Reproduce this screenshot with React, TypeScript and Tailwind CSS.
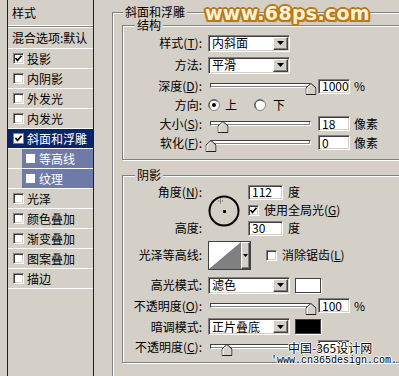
import type { ReactNode } from "react";

// classic win32 bevels
const sunken =
  "border border-t-[#808080] border-l-[#808080] border-b-white border-r-white shadow-[inset_1px_1px_0_#404040,inset_-1px_-1px_0_#d4d0c8]";
const raised =
  "border border-t-white border-l-white border-b-[#404040] border-r-[#404040] shadow-[inset_-1px_-1px_0_#808080]";
const group =
  "border border-[#808080] shadow-[inset_1px_1px_0_#fff,1px_1px_0_#fff]";

const layers = [
  { name: "投影", checked: true },
  { name: "内阴影" },
  { name: "外发光" },
  { name: "内发光" },
  { name: "斜面和浮雕", checked: true, active: true },
  { name: "等高线", sub: true },
  { name: "纹理", sub: true },
  { name: "光泽" },
  { name: "颜色叠加" },
  { name: "渐变叠加" },
  { name: "图案叠加" },
  { name: "描边" },
];

function Check({ checked, light }: { checked?: boolean; light?: boolean }) {
  return (
    <div
      className={`w-[11px] h-[11px] shrink-0 bg-white flex items-center justify-center ${
        light ? "border border-[#808080]" : sunken
      }`}
    >
      {checked && (
        <svg width="9" height="9" viewBox="0 0 9 9">
          <polyline
            points="1.5,4 3.5,6.5 7.5,1.8"
            fill="none"
            stroke="#000"
            strokeWidth="1.7"
          />
        </svg>
      )}
    </div>
  );
}

function LayerList() {
  return (
    <div className="ml-[7px] w-[87px] h-[376px] shrink-0 border-x border-[#202020]">
      <div className="h-[25px] pl-[4px] flex items-center">样式</div>
      <div className="h-[3px] border-y border-white bg-[#808080]" />
      <div className="h-[21px] pl-[4px] flex items-center border-b border-white whitespace-nowrap overflow-hidden">
        混合选项:默认
      </div>
      {layers.map((l) =>
        l.sub ? (
          <div key={l.name} className="h-[20px] pl-[14px] border-b border-white">
            <div className="h-full bg-[#6e7aa8] text-white flex items-center pl-[3px] gap-[3px]">
              <Check light />
              {l.name}
            </div>
          </div>
        ) : (
          <div
            key={l.name}
            className={`h-[20px] flex items-center pl-[5px] gap-[3px] border-b border-white ${
              l.active ? "bg-[#0a246a] text-white" : ""
            }`}
          >
            <Check checked={l.checked} light={l.active} />
            {l.name}
          </div>
        ),
      )}
    </div>
  );
}

function Label({ children }: { children: ReactNode }) {
  return <div className="w-[79px] shrink-0 text-right whitespace-nowrap">{children}</div>;
}

function Row({
  label,
  h,
  children,
}: {
  label: ReactNode;
  h: string;
  children?: ReactNode;
}) {
  return (
    <div className={`flex items-center ${h}`}>
      <Label>{label}</Label>
      <div className="ml-[6px] flex items-center">{children}</div>
    </div>
  );
}

function Select({ value }: { value: string }) {
  return (
    <div className={`w-[82px] h-[17px] bg-white p-[1px] flex ${sunken}`}>
      <div className="flex-1 pl-[2px] flex items-center whitespace-nowrap">
        {value}
      </div>
      <div className={`w-[15px] h-full bg-[#d4d0c8] flex items-center justify-center ${raised}`}>
        <svg width="7" height="4" viewBox="0 0 7 4">
          <polygon points="0,0 7,0 3.5,4" fill="#000" />
        </svg>
      </div>
    </div>
  );
}

function Field({ value, w = "w-[32px]" }: { value?: string; w?: string }) {
  return (
    <div className={`${w} h-[15px] bg-white pl-[3px] flex items-center ${sunken}`}>
      {value}
    </div>
  );
}

function Slider({ pct }: { pct: number }) {
  return (
    <div className="relative ml-[2px] mt-[6px] w-[101px] h-[12px] shrink-0">
      <div className="h-[5px] w-full border border-t-[#404040] border-l-[#404040] border-b-white border-r-white bg-white shadow-[inset_-1px_-1px_0_#808080]" />
      <svg
        className="absolute top-0 -translate-x-1/2"
        style={{ left: `${pct}%` }}
        width="11"
        height="12"
        viewBox="0 0 11 12"
      >
        <polygon
          points="5.5,0.5 10.5,5 10.5,11.5 0.5,11.5 0.5,5"
          fill="#d4d0c8"
          stroke="#202020"
        />
        <polyline points="1.5,11 1.5,5.4 5.5,1.8" fill="none" stroke="#fff" />
      </svg>
    </div>
  );
}

function Radio({ on }: { on?: boolean }) {
  return (
    <svg width="12" height="12" viewBox="0 0 12 12" className="shrink-0">
      <circle cx="6" cy="6" r="5.5" fill="#fff" stroke="#808080" />
      <path d="M2.5 9.5 A4.8 4.8 0 0 1 9.5 2.5" fill="none" stroke="#404040" />
      {on && <circle cx="6" cy="6" r="2" fill="#000" />}
    </svg>
  );
}

function AngleDial() {
  return (
    <svg width="32" height="32" viewBox="0 0 32 32">
      <circle cx="16" cy="16" r="14.5" fill="none" stroke="#000" strokeWidth="2" />
      <rect x="15" y="15" width="3" height="3" fill="#000" />
      <path d="M12.5 3.5 v5 M10 6 h5" stroke="#555" strokeDasharray="1 1" />
    </svg>
  );
}

function Contour() {
  return (
    <div className="flex h-[29px] border border-[#404040]">
      <svg width="32" height="27" viewBox="0 0 32 27">
        <rect width="32" height="27" fill="#fff" />
        <polygon points="0,27 32,0 32,27" fill="#808080" />
      </svg>
      <div className={`w-[9px] bg-[#d4d0c8] flex items-center justify-center ${raised}`}>
        <svg width="5" height="3" viewBox="0 0 5 3">
          <polygon points="0,0 5,0 2.5,3" fill="#000" />
        </svg>
      </div>
    </div>
  );
}

function Swatch({ color }: { color: string }) {
  return (
    <div className={`ml-[5px] w-[26px] h-[15px] border border-[#404040] ${color} shadow-[1px_1px_0_#fff]`} />
  );
}

export default function App() {
  return (
    <div className="relative w-[399px] h-[376px] overflow-hidden bg-[#d4d0c8] flex text-[12px] leading-[14px] text-black font-['Noto_Sans_CJK_SC',sans-serif]">
      <LayerList />

      <fieldset className={`ml-[18px] mt-[6px] w-[300px] h-[420px] shrink-0 ${group}`}>
        <legend className="ml-[10px] px-[2px] leading-[12px] bg-[#d4d0c8]">斜面和浮雕</legend>

        <fieldset className={`ml-[9px] mt-[1px] w-[280px] pt-[1px] pb-[7px] ${group}`}>
          <legend className="ml-[12px] px-[2px] leading-[12px] bg-[#d4d0c8]">结构</legend>
          <Row label={<>样式(<u>T</u>):</>} h="h-[22px]">
            <Select value="内斜面" />
          </Row>
          <Row label="方法:" h="h-[22px]">
            <Select value="平滑" />
          </Row>
          <Row label={<>深度(<u>D</u>):</>} h="h-[20px]">
            <Slider pct={100} />
            <div className="ml-[7px]">
              <Field value="1000" />
            </div>
            <span className="ml-[4px]">%</span>
          </Row>
          <Row label="方向:" h="h-[18px]">
            <Radio on />
            <span className="ml-[5px]">上</span>
            <div className="ml-[17px]">
              <Radio />
            </div>
            <span className="ml-[7px]">下</span>
          </Row>
          <Row label={<>大小(<u>S</u>):</>} h="h-[19px]">
            <Slider pct={13} />
            <div className="ml-[7px]">
              <Field value="18" />
            </div>
            <span className="ml-[4px]">像素</span>
          </Row>
          <Row label={<>软化(<u>F</u>):</>} h="h-[19px]">
            <Slider pct={1} />
            <div className="ml-[7px]">
              <Field value="0" />
            </div>
            <span className="ml-[4px]">像素</span>
          </Row>
        </fieldset>

        <fieldset className={`ml-[9px] mt-[9px] w-[280px] pb-[5px] ${group}`}>
          <legend className="ml-[12px] px-[2px] leading-[12px] bg-[#d4d0c8]">阴影</legend>
          <div className="flex pt-[2px]">
            <div className="flex flex-col">
              <div className="h-[18px] flex items-center">
                <Label>角度(<u>N</u>):</Label>
              </div>
              <div className="h-[18px]" />
              <div className="h-[18px] flex items-center">
                <Label>高度:</Label>
              </div>
            </div>
            <div className="ml-[6px] pt-[12px]">
              <AngleDial />
            </div>
            <div className="ml-[8px] flex flex-col">
              <div className="h-[18px] flex items-center">
                <Field value="112" w="w-[35px]" />
                <span className="ml-[5px]">度</span>
              </div>
              <div className="h-[18px] flex items-center">
                <Check checked />
                <span className="ml-[5px]">使用全局光(<u>G</u>)</span>
              </div>
              <div className="h-[18px] flex items-center">
                <Field value="30" w="w-[35px]" />
                <span className="ml-[5px]">度</span>
              </div>
            </div>
          </div>
          <div className="mt-[3px]">
            <Row label="光泽等高线:" h="h-[30px]">
              <Contour />
              <div className="ml-[15px]">
                <Check />
              </div>
              <span className="ml-[5px]">消除锯齿(<u>L</u>)</span>
            </Row>
          </div>
          <div className="mt-[5px]">
            <Row label="高光模式:" h="h-[20px]">
              <Select value="滤色" />
              <Swatch color="bg-white" />
            </Row>
          </div>
          <Row label={<>不透明度(<u>O</u>):</>} h="h-[21px]">
            <Slider pct={100} />
            <div className="ml-[7px]">
              <Field value="100" />
            </div>
            <span className="ml-[4px]">%</span>
          </Row>
          <Row label="暗调模式:" h="h-[21px]">
            <Select value="正片叠底" />
            <Swatch color="bg-black" />
          </Row>
          <Row label={<>不透明度(<u>C</u>):</>} h="h-[20px]">
            <Slider pct={17} />
            <div className="ml-[7px]">
              <Field />
            </div>
          </Row>
        </fieldset>
      </fieldset>

      {/* watermarks */}
      <div className="absolute left-[205px] top-[1px] text-[19px] leading-[24px] font-bold tracking-[0.3px] text-[#fcf1d2] font-['DejaVu_Sans',sans-serif] [text-shadow:2px_0_0_#b8791c,-2px_0_0_#b8791c,0_2px_0_#b8791c,0_-2px_0_#b8791c,1.5px_1.5px_0_#b8791c,-1.5px_1.5px_0_#b8791c,1.5px_-1.5px_0_#b8791c,-1.5px_-1.5px_0_#b8791c,2px_2px_1px_#c89040]">
        www.68ps.com
      </div>
      <div className="absolute left-[288px] top-[340px] leading-[16px] [text-shadow:1px_0_0_#fff,-1px_0_0_#fff,0_1px_0_#fff,0_-1px_0_#fff]">
        中国-365设计网
      </div>
      <div className="absolute left-[271px] top-[355px] text-[10px] leading-[11px] font-['Liberation_Mono',monospace] [text-shadow:1px_0_0_#fff,-1px_0_0_#fff,0_1px_0_#fff,0_-1px_0_#fff]">
        'www.cn365design.com.
      </div>
    </div>
  );
}
